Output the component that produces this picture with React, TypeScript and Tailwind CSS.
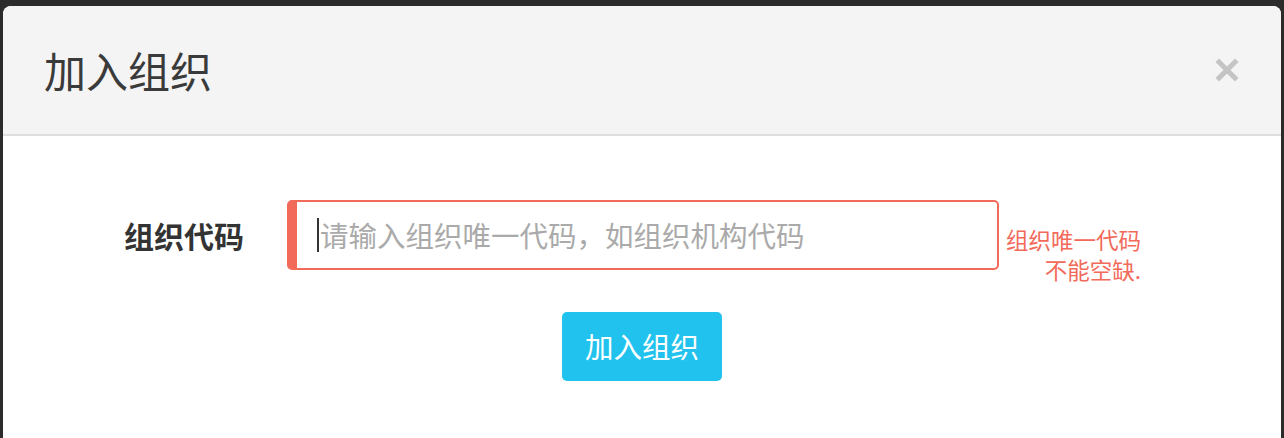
export default function App() {
  return (
    <div
      className="w-[1284px] h-[438px] overflow-hidden bg-[#2b2b2b] pl-[3px] pr-[3px] pt-[6px]"
      style={{ fontFamily: '"Noto Sans CJK SC", "Noto Sans", sans-serif' }}
    >
      <div className="h-[600px] bg-white rounded-t-[8px] overflow-hidden">
        <div className="h-[130px] bg-[#f4f4f4] border-b-2 border-[#dedede] flex items-center justify-between pl-[41px] pr-[42px]">
          <h1 className="text-[42px] leading-none text-[#3a3a3a] font-normal">加入组织</h1>
          <button className="text-[#c4c4c4]">
            <svg width="24" height="24" viewBox="0 0 24 24">
              <path d="M4 4L20 20M20 4L4 20" stroke="currentColor" strokeWidth="5" strokeLinecap="square" />
            </svg>
          </button>
        </div>

        <div className="pt-[64px] flex flex-col">
          <div className="flex items-start">
            <label className="w-[241px] h-[70px] flex items-center justify-end text-[30px] font-bold text-[#333]">
              组织代码
            </label>
            <div className="ml-[43px] w-[712px] h-[70px] rounded-[5px] border-2 border-l-[10px] border-[#f26a5a] flex items-center pl-[20px]">
              <span className="w-[2px] h-[34px] bg-[#333] mr-[1px]" />
              <span className="text-[28.5px] text-[#aaaaaa]">请输入组织唯一代码，如组织机构代码</span>
            </div>
            <div className="ml-[6px] mt-[24px] w-[136px] text-right text-[22.5px] leading-[30px] text-[#f26a5a]">
              组织唯一代码 不能空缺.
            </div>
          </div>

          <div className="flex justify-center mt-[28px]">
            <button className="w-[160px] h-[69px] rounded-[5px] bg-[#21c3ee] text-white text-[28.5px]">
              加入组织
            </button>
          </div>
        </div>
      </div>
    </div>
  );
}
